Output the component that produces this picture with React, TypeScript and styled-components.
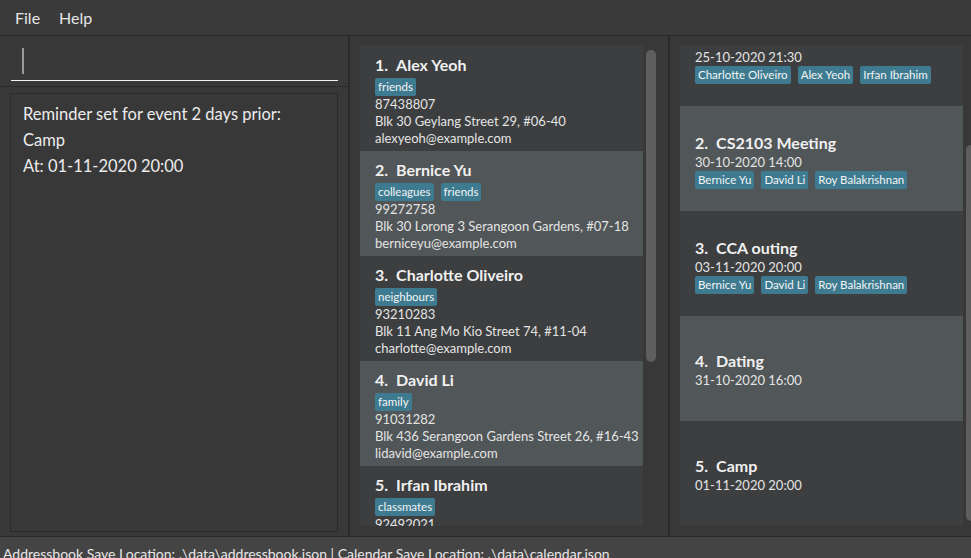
import React, { useLayoutEffect, useRef } from 'react';
import styled, { createGlobalStyle } from 'styled-components';

const GlobalStyle = createGlobalStyle`
  html, body { margin: 0; padding: 0; background: #383838; overflow: hidden; }
  body { font-family: Lato, "Liberation Sans", sans-serif; -webkit-font-smoothing: antialiased; }
  #root { width: 971px; height: 558px; overflow: hidden; }
`;

const Window = styled.div`
  width: 971px;
  height: 558px;
  display: flex;
  flex-direction: column;
  background: #383838;
  overflow: hidden;
`;

const MenuBar = styled.div`
  height: 36px;
  flex: none;
  box-sizing: border-box;
  display: flex;
  align-items: center;
  gap: 19px;
  padding: 0 0 1px 15px;
  background: #3a3a3a;
  border-bottom: 1px solid #2a2a2a;
  color: #e6e6e6;
  font-size: 16px;
`;

const MenuItem = styled.span``;

const Main = styled.div`
  flex: 1;
  min-height: 0;
  display: flex;
  width: 988px;
`;

const LeftColumn = styled.div`
  width: 348px;
  flex: none;
  display: flex;
  flex-direction: column;
`;

const CommandBox = styled.div`
  height: 51px;
  flex: none;
  box-sizing: border-box;
  border-bottom: 1px solid #2a2a2a;
  background: #393939;
  padding: 8px 10px 0 11px;
`;

const CommandField = styled.div`
  height: 37px;
  box-sizing: border-box;
  border-bottom: 1px solid #f2f2f2;
  padding: 4px 0 0 11px;
  display: flex;
  align-items: flex-start;
`;

const Caret = styled.span`
  width: 2px;
  height: 26px;
  background: #9a9a9a;
`;

const ResultArea = styled.div`
  flex: 1;
  min-height: 0;
  display: flex;
  padding: 6px 10px 4px 10px;
`;

const ResultBox = styled.div`
  flex: 1;
  border: 1px solid #2b2b2b;
  background: #383838;
  padding: 7px 12px;
  color: #ececec;
  font-size: 16.5px;
  line-height: 26px;
`;

const ResultLine = styled.div``;

const Divider = styled.div`
  width: 2px;
  flex: none;
  background: #2a2a2a;
`;

const ListPanel = styled.div`
  width: 318px;
  flex: none;
  box-sizing: border-box;
  display: flex;
  padding: 10px 9px 10px 10px;
`;

const ListViewport = styled.div`
  width: 283px;
  flex: none;
  overflow: hidden;
  background: #3c3e3f;
`;

const ScrollTrack = styled.div`
  width: 16px;
  flex: none;
  box-sizing: border-box;
  padding: 0 3px;
  display: flex;
  flex-direction: column;
`;

const ScrollThumb = styled.div`
  width: 10px;
  border-radius: 5px;
  background: #5e5e5e;
  flex: none;
`;

const Cell = styled.div<{ $odd: boolean }>`
  height: 105px;
  box-sizing: border-box;
  background: ${(p) => (p.$odd ? '#515658' : '#3c3e3f')};
  padding: 6px 15px 4px;
  display: flex;
  flex-direction: column;
`;

const EventCell = styled(Cell)`
  padding: 2px 15px 0;
  justify-content: center;
`;

const TitleRow = styled.div<{ $h?: number }>`
  height: ${(p) => p.$h ?? 24}px;
  flex: none;
  display: flex;
  align-items: center;
  gap: 8px;
  font-size: 16px;
  font-weight: 700;
  color: #f0f0f0;
  white-space: nowrap;
`;

const TagRow = styled.div<{ $top: number; $empty?: boolean }>`
  margin-top: ${(p) => p.$top}px;
  display: flex;
  gap: 7px;
  height: ${(p) => (p.$empty ? 2 : 18)}px;
  flex: none;
`;

const Tag = styled.span`
  background: #3e7b91;
  color: #f4f4f4;
  font-size: 11.5px;
  line-height: 18px;
  padding: 0 3px;
  border-radius: 2px;
  white-space: nowrap;
`;

const SmallLabel = styled.div`
  font-size: 13px;
  line-height: 17px;
  color: #e4e4e4;
  white-space: nowrap;
  flex: none;
`;

const StatusBar = styled.div`
  height: 22px;
  flex: none;
  box-sizing: border-box;
  border-top: 1px solid #2a2a2a;
  background: #444444;
  color: #e6e6e6;
  font-size: 14px;
  line-height: 17px;
  padding: 8px 0 0 3px;
  white-space: nowrap;
  overflow: hidden;
`;

type Person = { name: string; tags: string[]; phone: string; address: string; email: string };
type Event = { title: string; date: string; tags: string[] };

const persons: Person[] = [
  { name: 'Alex Yeoh', tags: ['friends'], phone: '87438807', address: 'Blk 30 Geylang Street 29, #06-40', email: 'alexyeoh@example.com' },
  { name: 'Bernice Yu', tags: ['colleagues', 'friends'], phone: '99272758', address: 'Blk 30 Lorong 3 Serangoon Gardens, #07-18', email: 'berniceyu@example.com' },
  { name: 'Charlotte Oliveiro', tags: ['neighbours'], phone: '93210283', address: 'Blk 11 Ang Mo Kio Street 74, #11-04', email: 'charlotte@example.com' },
  { name: 'David Li', tags: ['family'], phone: '91031282', address: 'Blk 436 Serangoon Gardens Street 26, #16-43', email: 'lidavid@example.com' },
  { name: 'Irfan Ibrahim', tags: ['classmates'], phone: '92492021', address: 'Blk 47 Tampines Street 20, #17-35', email: 'irfan@example.com' },
  { name: 'Roy Balakrishnan', tags: ['colleagues'], phone: '92624417', address: 'Blk 45 Aljunied Street 85, #11-31', email: 'royb@example.com' },
];

const events: Event[] = [
  { title: 'Dinner', date: '25-10-2020 21:30', tags: ['Charlotte Oliveiro', 'Alex Yeoh', 'Irfan Ibrahim'] },
  { title: 'CS2103 Meeting', date: '30-10-2020 14:00', tags: ['Bernice Yu', 'David Li', 'Roy Balakrishnan'] },
  { title: 'CCA outing', date: '03-11-2020 20:00', tags: ['Bernice Yu', 'David Li', 'Roy Balakrishnan'] },
  { title: 'Dating', date: '31-10-2020 16:00', tags: [] },
  { title: 'Camp', date: '01-11-2020 20:00', tags: [] },
];

function Tags({ tags, top }: { tags: string[]; top: number }) {
  return (
    <TagRow $top={top} $empty={tags.length === 0}>
      {tags.map((t) => (
        <Tag key={t}>{t}</Tag>
      ))}
    </TagRow>
  );
}

function PersonCard({ p, i }: { p: Person; i: number }) {
  return (
    <Cell $odd={i % 2 === 1}>
      <TitleRow>
        <span>{i + 1}.</span>
        <span>{p.name}</span>
      </TitleRow>
      <Tags tags={p.tags} top={2} />
      <SmallLabel>{p.phone}</SmallLabel>
      <SmallLabel>{p.address}</SmallLabel>
      <SmallLabel>{p.email}</SmallLabel>
    </Cell>
  );
}

function EventCard({ e, i }: { e: Event; i: number }) {
  return (
    <EventCell $odd={i % 2 === 1}>
      <TitleRow $h={23}>
        <span>{i + 1}.</span>
        <span>{e.title}</span>
      </TitleRow>
      <SmallLabel>{e.date}</SmallLabel>
      <Tags tags={e.tags} top={0} />
    </EventCell>
  );
}

export default function App() {
  const eventRef = useRef<HTMLDivElement>(null);
  useLayoutEffect(() => {
    if (eventRef.current) eventRef.current.scrollTop = 45;
  }, []);

  return (
    <>
      <GlobalStyle />
      <Window>
        <MenuBar>
          <MenuItem>File</MenuItem>
          <MenuItem>Help</MenuItem>
        </MenuBar>
        <Main>
          <LeftColumn>
            <CommandBox>
              <CommandField>
                <Caret />
              </CommandField>
            </CommandBox>
            <ResultArea>
              <ResultBox>
                <ResultLine>Reminder set for event 2 days prior:</ResultLine>
                <ResultLine>Camp</ResultLine>
                <ResultLine>At: 01-11-2020 20:00</ResultLine>
              </ResultBox>
            </ResultArea>
          </LeftColumn>
          <Divider />
          <ListPanel>
            <ListViewport>
              {persons.map((p, i) => (
                <PersonCard key={p.name} p={p} i={i} />
              ))}
            </ListViewport>
            <ScrollTrack>
              <ScrollThumb style={{ marginTop: 4, height: 312 }} />
            </ScrollTrack>
          </ListPanel>
          <Divider />
          <ListPanel>
            <ListViewport ref={eventRef}>
              {events.map((e, i) => (
                <EventCard key={e.title} e={e} i={i} />
              ))}
            </ListViewport>
            <ScrollTrack>
              <ScrollThumb style={{ marginTop: 99, height: 376 }} />
            </ScrollTrack>
          </ListPanel>
        </Main>
        <StatusBar>
          Addressbook Save Location: .\data\addressbook.json | Calendar Save Location: .\data\calendar.json
        </StatusBar>
      </Window>
    </>
  );
}
